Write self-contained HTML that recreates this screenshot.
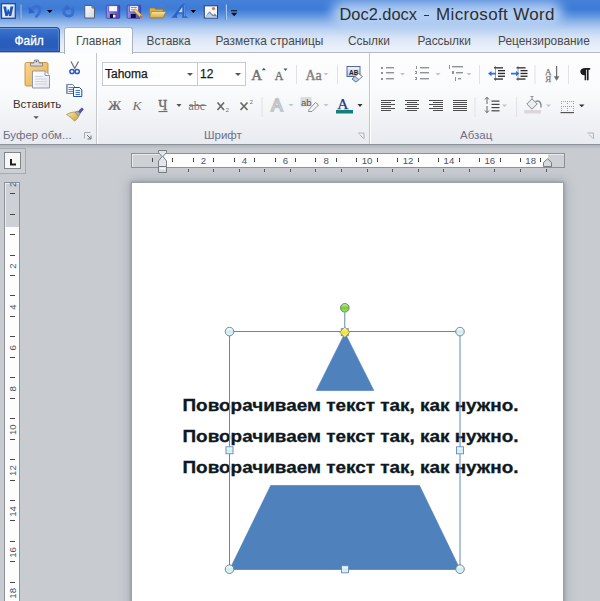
<!DOCTYPE html>
<html><head><meta charset="utf-8">
<style>
*{margin:0;padding:0;box-sizing:border-box}
html,body{width:600px;height:601px;overflow:hidden;background:#c8ccd1;font-family:"Liberation Sans",sans-serif}
.a{position:absolute}
#top{left:0;top:0;width:600px;height:53px;background:linear-gradient(#4581d8 0px,#3d7bd7 9px,#5b92de 15px,#8fb4e9 22px,#bcd3f2 30px,#d9e5f7 38px,#e7eef9 46px,#edf2fa 52px)}
#glow{left:332px;top:2px;width:230px;height:23px;background:rgba(198,220,248,.85);border-radius:11px;filter:blur(6px)}
.title{left:339.5px;top:5.3px;font-size:16.4px;color:#2e2e2e;white-space:nowrap;letter-spacing:0px}
.tab{top:34px;font-size:11.9px;color:#4a4a4a;white-space:nowrap}
#file{left:0;top:27px;width:60px;height:25px;background:linear-gradient(#3d74d0,#2b5fbd 50%,#2a5cb8 85%,#3466c4);border-radius:0 4px 0 0;border:1px solid #1f4f9f;border-left:none;box-shadow:inset 0 1px 0 #6a9ae0,inset -1px 0 0 #4f82d0}
#home{left:64px;top:27px;width:69px;height:27px;background:#fbfcfe;border:1px solid #a9b1bc;border-bottom:none;border-radius:3px 3px 0 0}
#ribbon{left:0;top:52px;width:600px;height:93px;background:linear-gradient(#fdfdfe 0%,#fafbfc 40%,#f1f3f6 70%,#e8ebf0 100%);border-top:1px solid #b3bac5;border-bottom:1px solid #8f959d}
#rshadow{left:0;top:145px;width:600px;height:4px;background:linear-gradient(#b0b4ba,#c8ccd1)}
.sep{width:1px;background:#dde1e7}
.gsep{width:2px;background:linear-gradient(90deg,#c3c7cd 50%,#ffffff 50%);}
.glab{top:129px;font-size:11.5px;color:#6c7088;white-space:nowrap}
.txt{font-size:11.5px;color:#222;white-space:nowrap}
.arr{width:0;height:0;border-left:3px solid transparent;border-right:3px solid transparent;border-top:3px solid #555}
.arrg{width:0;height:0;border-left:3px solid transparent;border-right:3px solid transparent;border-top:3px solid #b8bcc2}
#page{left:132px;top:183px;width:431px;height:430px;background:#fff;box-shadow:0 0 0 1px #9da2a9,0 0 3px 1px rgba(90,95,105,.45),0 0 10px 3px rgba(110,115,125,.35)}
</style></head><body>
<div class="a" id="top"></div>
<div class="a" id="glow"></div>

<!-- QAT -->
<svg class="a" style="left:0;top:0" width="245" height="24" viewBox="0 0 245 24">
 <defs>
  <linearGradient id="wg" x1="0" y1="0" x2="1" y2="1"><stop offset="0" stop-color="#ffffff"/><stop offset="1" stop-color="#c9d8ee"/></linearGradient>
  <linearGradient id="ug" x1="0" y1="0" x2="0" y2="1"><stop offset="0" stop-color="#7aa4ea"/><stop offset="1" stop-color="#2f61c4"/></linearGradient>
  <linearGradient id="pg" x1="0" y1="0" x2="1" y2="1"><stop offset="0" stop-color="#ffffff"/><stop offset="1" stop-color="#cfd3dc"/></linearGradient>
  <linearGradient id="fg" x1="0" y1="0" x2="0" y2="1"><stop offset="0" stop-color="#f7e7a0"/><stop offset="1" stop-color="#d8a840"/></linearGradient>
  <linearGradient id="sg" x1="0" y1="0" x2="1" y2="0"><stop offset="0" stop-color="#9a90ee"/><stop offset="1" stop-color="#5046c0"/></linearGradient>
 </defs>
 <!-- word icon -->
 <rect x="1.5" y="3.7" width="13.8" height="14.6" fill="url(#wg)" stroke="#1d4c9c" stroke-width="1.3"/>
 <path d="M3.2 6.5 H6.2 L7 12.5 L7.6 9.5 H9 L9.6 12.5 L10.4 6.5 H13.4 L11.2 16 H8.9 L8.3 13.2 L7.7 16 H5.4 Z" fill="#1a55b8"/>
 <rect x="19.6" y="4.5" width="1" height="15" fill="#5f7aa8"/><rect x="20.6" y="4.5" width="0.8" height="15" fill="#b8cdee"/>
 <!-- undo -->
 <path d="M31.5 10 C33.5 5.8 38.8 5.3 39.8 8.8 C40.6 11.8 38.5 14.2 36.4 16.4" fill="none" stroke="#3a6ed0" stroke-width="2.8" stroke-linecap="round"/>
 <path d="M28.4 6.8 L29 13.5 L35.2 12.4 Z" fill="#2f62c8"/>
 <path d="M47 10 L52.5 10 L49.75 13 Z" fill="#000"/>
 <!-- redo -->
 <path d="M72.3 9 C74 12 72.6 16 68.5 16 C64.8 16 63.3 13 63.8 10.6 C64.2 8.8 65.6 7.6 67 7.4" fill="none" stroke="#3a6ed0" stroke-width="3" stroke-linecap="round"/>
 <path d="M66 4.8 L70.5 8.6 L65.5 10.5 Z" fill="#3566c8"/>
 <!-- new doc -->
 <path d="M84.8 5.5 L92 5.5 L94.5 8 L94.5 18 L84.8 18 Z" fill="url(#pg)" stroke="#4d5566" stroke-width="0.9"/>
 <path d="M92 5.5 L92 8 L94.5 8" fill="none" stroke="#4d5566" stroke-width="0.9"/>
 <!-- save -->
 <rect x="106.3" y="5.3" width="13.4" height="13" rx="0.8" fill="url(#sg)" stroke="#3a32a0" stroke-width="0.7"/>
 <rect x="108.8" y="5.8" width="8.6" height="6" fill="#f6f8fc" stroke="#4a44b8" stroke-width="0.6"/>
 <rect x="110" y="14" width="6.2" height="4" fill="#14142a"/>
 <rect x="113" y="14.6" width="2.6" height="3" fill="#f0f0f4"/>
 <!-- edit (floppy + pencil) -->
 <rect x="127.2" y="5.3" width="13.4" height="13" rx="0.8" fill="url(#sg)" stroke="#3a32a0" stroke-width="0.7"/>
 <rect x="129.6" y="5.8" width="8.6" height="6" fill="#f6f8fc" stroke="#4a44b8" stroke-width="0.6"/>
 <path d="M130.8 7.6 H136.8 M130.8 9.8 H135" stroke="#6a6a8a" stroke-width="0.8"/>
 <rect x="130.8" y="14" width="5" height="4" fill="#14142a"/>
 <path d="M133.6 10.6 L135.6 8.8 L142.6 16 L140.6 18 Z" fill="#f3d25a" stroke="#a88a2a" stroke-width="0.6"/>
 <path d="M140.2 15.2 L142.6 16 L141.2 18.4 L139.6 17.6 Z" fill="#e0603a"/>
 <!-- open folder -->
 <path d="M149.5 8 L154.5 8 L155.5 9.2 L163 9.2 L163 17.8 L149.5 17.8 Z" fill="#d9ad4a" stroke="#a57a22" stroke-width="0.7"/>
 <path d="M151.5 11.5 L166 11.5 L163 17.8 L149.5 17.8 Z" fill="url(#fg)" stroke="#a57a22" stroke-width="0.7"/>
 <path d="M159.5 7.5 C161 4.8 164 4.8 165 7.8" fill="none" stroke="#5f7fa8" stroke-width="1.2"/>
 <path d="M163.6 6.6 L166.6 9 L163.2 9.6 Z" fill="#5f7fa8"/>
 <!-- wordart A -->
 <path d="M171.5 17.2 C174 15.5 177 11 180.5 6 L183.5 3.5 L185 3.5 L185.5 16 L188.8 17.8 L181.5 17.8 L182.5 16.5 L182.3 13.8 L177.8 13.8 C176.8 15.2 176.5 16.5 177.5 17.8 L171.5 17.8 Z" fill="#2c62c8"/>
 <path d="M178.6 12.3 L182.3 7 L182.3 12.3 Z" fill="#c8daf6"/>
 <path d="M183.8 4.5 L184.6 4.5 L185 16.5 L184.2 16.5 Z" fill="#6a9ae8"/>
 <path d="M190.5 10 L196 10 L193.25 13 Z" fill="#000"/>
 <!-- picture -->
 <rect x="204.3" y="5.8" width="13.2" height="12.2" fill="#f4f7fc" stroke="#24406e" stroke-width="1"/>
 <path d="M205 17.5 L209.5 11.2 L213.2 15 L214.8 13.6 L217 16 L217 17.5 Z" fill="#6a86b0"/><path d="M205 17.5 L209.5 12.8 L212.5 16 L217 16.5 L217 17.5 Z" fill="#ffffff" opacity=".6"/>
 <circle cx="213.5" cy="8.6" r="1.6" fill="#f07030"/>
 <rect x="225" y="4.5" width="1.2" height="15.5" fill="#6d84ad"/><rect x="226.2" y="4.5" width="0.8" height="15.5" fill="#c4d6f0"/>
 <rect x="231" y="10.2" width="6.2" height="1.1" fill="#111"/>
 <path d="M231 12.8 L237.3 12.8 L234.15 16.2 Z" fill="#111"/>
</svg>
<div class="a title">Doc2.docx</div><div class="a" style="left:424px;top:14.6px;width:5px;height:1.3px;background:#333"></div><div class="a title" style="left:436px;font-size:17px;top:4.8px;letter-spacing:0.35px">Microsoft Word</div>

<div class="a" id="file"></div>
<div class="a tab" style="left:14.5px;color:#fff;-webkit-text-stroke:0.3px #fff">Файл</div>
<div class="a" id="ribbon"></div>
<div class="a" id="rshadow"></div>
<svg class="a" style="left:0;top:0" width="100" height="145"><path d="M84.5 138.5 V132.5 H90.5" fill="none" stroke="#a9adb3" stroke-width="1"/><path d="M87 135 L90.5 138.5 M91 135.5 V139 H87.5" fill="none" stroke="#6f747a" stroke-width="1"/></svg>
<div class="a" id="home"></div>
<div class="a tab" style="left:76px">Главная</div>
<div class="a tab" style="left:146.5px">Вставка</div>
<div class="a tab" style="left:215.5px">Разметка страницы</div>
<div class="a tab" style="left:348px">Ссылки</div>
<div class="a tab" style="left:417.5px">Рассылки</div>
<div class="a tab" style="left:498px">Рецензирование</div>


<!-- clipboard group icons -->
<svg class="a" style="left:0;top:52px" width="96" height="92" viewBox="0 52 96 92">
 <defs>
  <linearGradient id="cbg" x1="0" y1="0" x2="1" y2="1"><stop offset="0" stop-color="#f8d690"/><stop offset="1" stop-color="#e9ae52"/></linearGradient>
  <linearGradient id="dg" x1="0" y1="0" x2="1" y2="1"><stop offset="0" stop-color="#ffffff"/><stop offset="1" stop-color="#e2e6ee"/></linearGradient>
  <linearGradient id="brg" x1="0" y1="0" x2="1" y2="1"><stop offset="0" stop-color="#f8eea0"/><stop offset="1" stop-color="#c8a040"/></linearGradient>
 </defs>
 <rect x="25" y="62.5" width="23" height="23.5" rx="1.5" fill="url(#cbg)" stroke="#c28e3c" stroke-width="0.9"/>
 <path d="M30.5 66 L30.5 63 L34 63 L34.5 60 L38.5 60 L39 63 L42.5 63 L42.5 66 Z" fill="#d8dce2" stroke="#7d838c" stroke-width="0.9"/>
 <circle cx="36.5" cy="61.5" r="0.8" fill="#555"/>
 <path d="M32.5 71 L45 71 L49.5 75.5 L49.5 88 L32.5 88 Z" fill="url(#dg)" stroke="#8a919c" stroke-width="0.9"/>
 <path d="M45 71 L45 75.5 L49.5 75.5" fill="#f2f4f8" stroke="#8a919c" stroke-width="0.9"/>
 <path d="M35 76.5 H43 M35 79 H47 M35 81.5 H47 M35 84 H47" stroke="#c5cfdd" stroke-width="0.9"/>
 <path d="M33.4 116.3 L38.8 116.3 L36.1 119 Z" fill="#555"/>
 <!-- scissors -->
 <path d="M71 61.5 L75 69 M78.5 61.5 L74.5 69" stroke="#6b7480" stroke-width="1.3"/>
 <circle cx="72" cy="71.5" r="2.1" fill="none" stroke="#2f58c0" stroke-width="1.5"/>
 <circle cx="77.2" cy="71.5" r="2.1" fill="none" stroke="#2f58c0" stroke-width="1.5"/>
 <!-- copy -->
 <path d="M66.5 84.5 L72.5 84.5 L74.5 86.5 L74.5 93.5 L66.5 93.5 Z" fill="#f2f5fb" stroke="#5a76a8" stroke-width="0.9"/>
 <rect x="66.5" y="84.5" width="1.5" height="9" fill="#9aa8c0"/>
 <path d="M68.5 87.5 H73 M68.5 89.5 H73 M68.5 91.5 H73" stroke="#3e78d8" stroke-width="0.9"/>
 <path d="M73.5 87.5 L79.5 87.5 L81.8 89.8 L81.8 96.5 L73.5 96.5 Z" fill="#f4f7fd" stroke="#1f4ea8" stroke-width="1"/>
 <path d="M75.5 90.5 H80 M75.5 92.5 H80 M75.5 94.5 H80" stroke="#2f68d0" stroke-width="0.9"/>
 <!-- format painter -->
 <path d="M77.5 112.5 L81 108.5 C81.8 107.8 83.2 108.2 83.2 109.5 L79.5 114 Z" fill="#5b4fb5" stroke="#3c3090" stroke-width="0.6"/>
 <path d="M75 112 L77.8 111 L80 113.5 L78.6 116.5 Z" fill="#a8acb4" stroke="#6a6e76" stroke-width="0.6"/>
 <path d="M66.5 114.5 C69 113 72.5 112 75 112 L78.6 116.5 C77.5 118.5 76 120.3 74.5 121 C72 118.5 69 116 66.5 114.5 Z" fill="url(#brg)" stroke="#9a8440" stroke-width="0.7"/>
 </svg>
<div class="a gsep" style="left:96px;top:53px;height:91px"></div>
<!-- group separators -->

<div class="a gsep" style="left:369px;top:53px;height:91px"></div>


<!-- font group -->
<div class="a" style="left:102px;top:62px;width:96px;height:24px;background:#fff;border:1px solid #c6cbd3"></div>
<div class="a" style="left:197px;top:62px;width:49px;height:24px;background:#fff;border:1px solid #c6cbd3"></div>
<div class="a txt" style="left:105px;top:67px;font-size:12px;color:#1a1a1a;-webkit-text-stroke:0.25px #1a1a1a">Tahoma</div>
<div class="a txt" style="left:200px;top:67px;font-size:12px;color:#1a1a1a;-webkit-text-stroke:0.25px #1a1a1a">12</div>
<div class="a arr" style="left:187px;top:73px"></div>
<div class="a arr" style="left:235px;top:73px"></div>
<svg class="a" style="left:96px;top:52px" width="274" height="92" viewBox="96 52 274 92">
 <defs>
  <linearGradient id="ceg" x1="0" y1="0" x2="0" y2="1"><stop offset="0" stop-color="#f2f5fb"/><stop offset="1" stop-color="#b7c8e6"/></linearGradient>
 </defs>
 <text x="251.3" y="79.8" font-family="Liberation Serif" font-size="15" fill="#707070" stroke="#707070" stroke-width="0.45">A</text>
 <path d="M261.8 70.3 L263.8 67.8 L265.8 70.3 Z" fill="#555"/>
 <text x="274.8" y="80.3" font-family="Liberation Serif" font-size="12" fill="#707070" stroke="#707070" stroke-width="0.35">A</text>
 <path d="M283.5 68.5 L285.5 71 L287.5 68.5 Z" fill="#555"/>
 <rect x="296" y="65" width="1" height="19" fill="#dfe2e7"/>
 <text x="305.5" y="80" font-family="Liberation Serif" font-size="14" fill="#7c7c7c" stroke="#7c7c7c" stroke-width="0.35">Aa</text>
 <path d="M323.5 73 L328.5 73 L326 75.5 Z" fill="#c2c5ca"/>
 <rect x="337" y="65" width="1" height="19" fill="#dfe2e7"/>
 <!-- clear formatting -->
 <rect x="347" y="66.5" width="13" height="10" fill="url(#ceg)" stroke="#3a5a98" stroke-width="0.9"/>
 <text x="349" y="74.5" font-family="Liberation Sans" font-weight="bold" font-size="6.5" fill="#222">AB</text>
 <path d="M352 79 L358.5 73.5 L362.5 76.5 L356 82 Z" fill="#fff" stroke="#5a6a8a" stroke-width="0.9"/>
 <path d="M352 79 L355 76.5 L359 79.5 L356 82 Z" fill="#b9d0ec" stroke="#5a6a8a" stroke-width="0.7"/>
 <!-- row 2 -->
 <text x="107.8" y="110" font-family="Liberation Serif" font-weight="bold" font-size="13.2" fill="#747474" transform="translate(0 110) skewX(-5) translate(0 -110)">Ж</text>
 <text x="132.5" y="110" font-family="Liberation Serif" font-style="italic" font-size="13.5" fill="#707070">К</text>
 <text x="158.2" y="110" font-family="Liberation Serif" font-size="14" fill="#6a6a6a" stroke="#6a6a6a" stroke-width="0.3">Ч</text>
 <rect x="158.5" y="111" width="9" height="1.1" fill="#6e6e6e"/>
 <path d="M176.5 104 L181.5 104 L179 107 Z" fill="#555"/>
 <text x="188.5" y="110" font-family="Liberation Serif" font-size="12" fill="#777">abc</text>
 <rect x="189" y="105" width="17.5" height="1" fill="#777"/>
 <path d="M217.5 102.5 L224 110 M224 102.5 L217.5 110" stroke="#6a6a6a" stroke-width="1.7"/>
 <text x="225.8" y="111.5" font-family="Liberation Sans" font-size="5.5" fill="#6a6a6a">2</text>
 <path d="M240.5 102.5 L247.5 110 M247.5 102.5 L240.5 110" stroke="#6a6a6a" stroke-width="1.7"/>
 <text x="249.7" y="104.3" font-family="Liberation Sans" font-size="5.5" fill="#6a6a6a">2</text>
 <rect x="261.5" y="97" width="1" height="20" fill="#dfe2e7"/>
 <text x="271.3" y="111" font-family="Liberation Sans" font-size="17" fill="#fafafa" stroke="#d6d8dc" stroke-width="2.2">A</text><text x="271.3" y="111" font-family="Liberation Sans" font-size="17" fill="#f4f4f5" stroke="#b4b7bc" stroke-width="0.8">A</text>
 <path d="M288.5 104 L293.5 104 L291 106.5 Z" fill="#c2c5ca"/>
 <rect x="300.5" y="97" width="11" height="9.5" fill="#dadcdf"/><text x="301" y="105.5" font-family="Liberation Sans" font-size="9.5" fill="#555">ab</text>
 <path d="M309 109.5 L315.5 102.5 L318.5 105 L312 111.5 L308.5 111.5 Z" fill="#f4f4f6" stroke="#85888d" stroke-width="0.9"/>
 <path d="M323.5 104 L328.5 104 L326 106.5 Z" fill="#c2c5ca"/>
 <text x="337.2" y="108.8" font-family="Liberation Serif" font-size="15.5" fill="#22378a" stroke="#22378a" stroke-width="0.25">A</text>
 <rect x="336" y="110" width="17" height="3.5" fill="#15807a"/>
 <path d="M357.5 104 L362.5 104 L360 107 Z" fill="#333"/>
 <path d="M358 133 L364 133 L364 139 M359.5 134.5 L363.5 138.5" fill="none" stroke="#a9aeb6" stroke-width="0.9"/>
</svg>

<!-- paragraph group -->
<svg class="a" style="left:370px;top:52px" width="230" height="92" viewBox="370 52 230 92">
 <g fill="#8e9299">
  <rect x="381" y="67" width="2" height="2"/><rect x="381" y="72" width="2" height="2"/><rect x="381" y="78" width="2" height="2"/>
  <rect x="386" y="67" width="8" height="1"/><rect x="386" y="68" width="8" height="1" opacity=".4"/><rect x="386" y="72" width="8" height="1"/><rect x="386" y="73" width="8" height="1" opacity=".4"/><rect x="386" y="78" width="8" height="1"/><rect x="386" y="79" width="8" height="1" opacity=".4"/>
  <rect x="416" y="66" width="1" height="3"/><rect x="415" y="71" width="2" height="1"/><rect x="416" y="72" width="1" height="1"/><rect x="415" y="73" width="2" height="1"/><rect x="415" y="77" width="2" height="1"/><rect x="416" y="78" width="1" height="1"/><rect x="415" y="79" width="2" height="1"/>
  <rect x="420" y="67" width="9" height="1"/><rect x="420" y="68" width="9" height="1" opacity=".4"/><rect x="420" y="72" width="9" height="1"/><rect x="420" y="73" width="9" height="1" opacity=".4"/><rect x="420" y="78" width="9" height="1"/><rect x="420" y="79" width="9" height="1" opacity=".4"/>
  <rect x="449" y="65" width="1" height="4"/><rect x="452" y="66" width="11" height="1"/><rect x="452" y="67" width="11" height="1" opacity=".4"/>
  <rect x="452" y="71" width="2" height="3"/><rect x="456" y="72" width="7" height="1"/><rect x="456" y="73" width="7" height="1" opacity=".4"/>
  <rect x="455" y="77" width="1" height="4"/><rect x="458" y="78" width="3" height="1"/><rect x="458" y="79" width="3" height="1" opacity=".4"/>
 </g>
 <g fill="#bfc3ca"><path d="M400 73 L405 73 L402.5 75.5 Z"/><path d="M435.5 73 L440.5 73 L438 75.5 Z"/><path d="M466.5 73 L471.5 73 L469 75.5 Z"/></g>
 <rect x="479" y="65" width="1" height="19" fill="#dfe2e7"/>
 <!-- indent -->
 <g fill="#2a2a2a">
  <rect x="494" y="67.2" width="9" height="1.3"/><rect x="498" y="70" width="7" height="1.3"/><rect x="498" y="72.8" width="7" height="1.3"/><rect x="498" y="75.6" width="7" height="1.3"/><rect x="494" y="78.4" width="9" height="1.3"/>
  <rect x="516.5" y="67.2" width="9" height="1.3"/><rect x="520.5" y="70" width="7" height="1.3"/><rect x="520.5" y="72.8" width="7" height="1.3"/><rect x="520.5" y="75.6" width="7" height="1.3"/><rect x="516.5" y="78.4" width="9" height="1.3"/>
 </g>
 <path d="M495.5 66.5 V81" stroke="#444" stroke-width="1" stroke-dasharray="1,1"/>
 <path d="M518 66.5 V81" stroke="#444" stroke-width="1" stroke-dasharray="1,1"/>
 <path d="M488 73.6 L491.5 71 L491.5 72.8 L496 72.8 L496 74.4 L491.5 74.4 L491.5 76.2 Z" fill="#2f6fe0"/>
 <path d="M519.5 73.6 L516 71 L516 72.8 L511 72.8 L511 74.4 L516 74.4 L516 76.2 Z" fill="#2f6fe0"/>
 <rect x="534.5" y="65" width="1" height="19" fill="#dfe2e7"/>
 <!-- sort -->
 <text x="545" y="74.5" font-family="Liberation Serif" font-size="9" fill="#7a7a7a" stroke="#7a7a7a" stroke-width="0.25">А</text>
 <text x="545.3" y="81.7" font-family="Liberation Serif" font-size="9" fill="#7a7a7a" stroke="#7a7a7a" stroke-width="0.25">Я</text>
 <rect x="556" y="66" width="1.2" height="12" fill="#6e6e6e"/><path d="M553.8 76.3 L559.4 76.3 L556.6 80.8 Z" fill="#6e6e6e"/>
 <rect x="568" y="65" width="1" height="19" fill="#dfe2e7"/>
 <path d="M585.3 68 H590.2 V69.8 H588.6 V80.3 H587 V69.8 H586.2 V80.3 H584.6 V75.3 C582 75.3 580.3 73.8 580.3 71.6 C580.3 69.4 582.2 68 585.3 68 Z" fill="#1e1e1e"/>
 <!-- align -->
 <g fill="#4e4e4e"><rect x="381" y="100" width="14" height="1"/><rect x="381" y="102" width="10" height="1"/><rect x="381" y="104" width="14" height="1"/><rect x="381" y="106" width="10" height="1"/><rect x="381" y="108" width="14" height="1"/><rect x="381" y="110" width="10" height="1"/><rect x="405" y="100" width="14" height="1"/><rect x="407" y="102" width="10" height="1"/><rect x="405" y="104" width="14" height="1"/><rect x="407" y="106" width="10" height="1"/><rect x="405" y="108" width="14" height="1"/><rect x="407" y="110" width="10" height="1"/><rect x="429" y="100" width="14" height="1"/><rect x="433" y="102" width="10" height="1"/><rect x="429" y="104" width="14" height="1"/><rect x="433" y="106" width="10" height="1"/><rect x="429" y="108" width="14" height="1"/><rect x="433" y="110" width="10" height="1"/><rect x="453" y="100" width="14" height="1"/><rect x="453" y="102" width="14" height="1"/><rect x="453" y="104" width="14" height="1"/><rect x="453" y="106" width="14" height="1"/><rect x="453" y="108" width="14" height="1"/><rect x="453" y="110" width="14" height="1"/></g>
 <rect x="474.5" y="97" width="1" height="20" fill="#dfe2e7"/>
 <!-- line spacing -->
 <path d="M487 97.5 V104 M487 106 V112.5" stroke="#666" stroke-width="1"/>
 <path d="M485 99.5 L487 97.3 L489 99.5 M485 110.5 L487 112.7 L489 110.5" fill="none" stroke="#666" stroke-width="1"/>
 <g fill="#444"><rect x="491.5" y="100.5" width="8" height="1.2"/><rect x="491.5" y="103.8" width="8" height="1.2"/><rect x="491.5" y="107" width="8" height="1.2"/><rect x="491.5" y="110.2" width="8" height="1.2"/></g>
 <path d="M502 104.5 L507 104.5 L504.5 107 Z" fill="#bfc3ca"/>
 <rect x="516" y="97" width="1" height="20" fill="#dfe2e7"/>
 <!-- shading -->
 <path d="M526.8 104 L532 98.8 L537.2 104 L532 109.2 Z" fill="#ececee" stroke="#85888d" stroke-width="1"/>
 <path d="M532 98.8 V96.8 M530.5 96.5 H533.5" stroke="#85888d" stroke-width="0.9"/>
 <path d="M535.5 101.5 C539 100 541.5 102 541 107.5" fill="none" stroke="#8d9095" stroke-width="1.5"/>
 <rect x="524.2" y="110" width="16.8" height="3.5" fill="#dcd6dc"/>
 <path d="M546 104.5 L551 104.5 L548.5 107 Z" fill="#bfc3ca"/>
 <!-- borders -->
 <g fill="#9a9ea4"><rect x="561" y="101" width="1" height="1"/><rect x="563" y="101" width="1" height="1"/><rect x="565" y="101" width="1" height="1"/><rect x="567" y="101" width="1" height="1"/><rect x="569" y="101" width="1" height="1"/><rect x="571" y="101" width="1" height="1"/><rect x="573" y="101" width="1" height="1"/><rect x="561" y="106" width="1" height="1"/><rect x="563" y="106" width="1" height="1"/><rect x="565" y="106" width="1" height="1"/><rect x="567" y="106" width="1" height="1"/><rect x="569" y="106" width="1" height="1"/><rect x="571" y="106" width="1" height="1"/><rect x="573" y="106" width="1" height="1"/><rect x="561" y="103" width="1" height="1"/><rect x="561" y="108" width="1" height="1"/><rect x="561" y="110" width="1" height="1"/><rect x="567" y="103" width="1" height="1"/><rect x="567" y="108" width="1" height="1"/><rect x="567" y="110" width="1" height="1"/><rect x="573" y="103" width="1" height="1"/><rect x="573" y="108" width="1" height="1"/><rect x="573" y="110" width="1" height="1"/></g>
 <rect x="560.5" y="112" width="13.5" height="1.2" fill="#555"/>
 <path d="M579 104.5 L584.5 104.5 L581.75 107.3 Z" fill="#333"/>
 <path d="M587.5 133 L593.5 133 L593.5 139 M589 134.5 L593 138.5" fill="none" stroke="#a9aeb6" stroke-width="0.9"/>
</svg>
<div class="a glab" style="left:3px">Буфер обм...</div>
<div class="a glab" style="left:204px">Шрифт</div>
<div class="a glab" style="left:460px">Абзац</div>

<div class="a txt" style="left:13px;top:97.5px;font-size:11.4px;color:#333">Вставить</div>

<!-- rulers -->
<div class="a" style="left:-2px;top:148px;width:28px;height:26px;border:1px solid #a6aab1;background:#ccd0d5"></div>
<div class="a" style="left:4px;top:152px;width:17px;height:17px;border:1px solid #80858c;background:#f7f7f7"></div>
<svg class="a" style="left:0;top:0" width="30" height="180"><path d="M11 159 V164.5 H16" fill="none" stroke="#1e1e1e" stroke-width="2"/></svg>
<div class="a" style="left:131px;top:153px;width:434px;height:15px;background:#cdd0d5;border:1px solid #8c9199;box-shadow:inset 1px 1px 0 #e9ebee"></div>
<div class="a" style="left:164px;top:154px;width:384px;height:13px;background:#fdfdfd"></div>
<svg class="a" style="left:0;top:0" width="600" height="601" viewBox="0 0 600 601">
<rect x="152" y="158" width="1" height="4" fill="#4a4a4a"/>
<rect x="172" y="158" width="1" height="4" fill="#4a4a4a"/>
<rect x="193" y="158" width="1" height="4" fill="#4a4a4a"/>
<rect x="213" y="158" width="1" height="4" fill="#4a4a4a"/>
<rect x="234" y="158" width="1" height="4" fill="#4a4a4a"/>
<rect x="254" y="158" width="1" height="4" fill="#4a4a4a"/>
<rect x="275" y="158" width="1" height="4" fill="#4a4a4a"/>
<rect x="295" y="158" width="1" height="4" fill="#4a4a4a"/>
<rect x="315" y="158" width="1" height="4" fill="#4a4a4a"/>
<rect x="336" y="158" width="1" height="4" fill="#4a4a4a"/>
<rect x="356" y="158" width="1" height="4" fill="#4a4a4a"/>
<rect x="377" y="158" width="1" height="4" fill="#4a4a4a"/>
<rect x="397" y="158" width="1" height="4" fill="#4a4a4a"/>
<rect x="418" y="158" width="1" height="4" fill="#4a4a4a"/>
<rect x="438" y="158" width="1" height="4" fill="#4a4a4a"/>
<rect x="459" y="158" width="1" height="4" fill="#4a4a4a"/>
<rect x="479" y="158" width="1" height="4" fill="#4a4a4a"/>
<rect x="500" y="158" width="1" height="4" fill="#4a4a4a"/>
<rect x="520" y="158" width="1" height="4" fill="#4a4a4a"/>
<rect x="540" y="158" width="1" height="4" fill="#4a4a4a"/>

<text x="203.50" y="164.3" font-family="Liberation Sans" font-size="9.6" fill="#4a5468" text-anchor="middle">2</text>
<text x="244.40" y="164.3" font-family="Liberation Sans" font-size="9.6" fill="#4a5468" text-anchor="middle">4</text>
<text x="285.30" y="164.3" font-family="Liberation Sans" font-size="9.6" fill="#4a5468" text-anchor="middle">6</text>
<text x="326.20" y="164.3" font-family="Liberation Sans" font-size="9.6" fill="#4a5468" text-anchor="middle">8</text>
<text x="367.10" y="164.3" font-family="Liberation Sans" font-size="9.6" fill="#4a5468" text-anchor="middle">10</text>
<text x="408.00" y="164.3" font-family="Liberation Sans" font-size="9.6" fill="#4a5468" text-anchor="middle">12</text>
<text x="448.90" y="164.3" font-family="Liberation Sans" font-size="9.6" fill="#4a5468" text-anchor="middle">14</text>
<text x="489.80" y="164.3" font-family="Liberation Sans" font-size="9.6" fill="#4a5468" text-anchor="middle">16</text>
<text x="530.70" y="164.3" font-family="Liberation Sans" font-size="9.6" fill="#4a5468" text-anchor="middle">18</text>
<rect x="188" y="169" width="1" height="3" fill="#5a5a5a"/>
<rect x="213" y="169" width="1" height="3" fill="#5a5a5a"/>
<rect x="239" y="169" width="1" height="3" fill="#5a5a5a"/>
<rect x="264" y="169" width="1" height="3" fill="#5a5a5a"/>
<rect x="290" y="169" width="1" height="3" fill="#5a5a5a"/>
<rect x="315" y="169" width="1" height="3" fill="#5a5a5a"/>
<rect x="341" y="169" width="1" height="3" fill="#5a5a5a"/>
<rect x="367" y="169" width="1" height="3" fill="#5a5a5a"/>
<rect x="392" y="169" width="1" height="3" fill="#5a5a5a"/>
<rect x="418" y="169" width="1" height="3" fill="#5a5a5a"/>
<rect x="443" y="169" width="1" height="3" fill="#5a5a5a"/>
<rect x="469" y="169" width="1" height="3" fill="#5a5a5a"/>
<rect x="494" y="169" width="1" height="3" fill="#5a5a5a"/>
<rect x="520" y="169" width="1" height="3" fill="#5a5a5a"/>
<rect x="546" y="169" width="1" height="3" fill="#5a5a5a"/>
<path d="M158.5 150.5 H166.5 V152.5 L163 156.5 L166.5 161 V166.5 H158.5 V161 L162 156.5 L158.5 152.5 Z" fill="#e4e6e9" stroke="#6e737a" stroke-width="0.9"/>
<path d="M158.5 166.5 H166.5 V172.5 H158.5 Z" fill="#d8dadd" stroke="#6e737a" stroke-width="0.9"/>
<path d="M159.3 167.5 H165.7 V169.5 H159.3 Z" fill="#f4f5f6"/>
<path d="M543.5 166.5 V162.5 L547.5 158.8 L551.5 162.5 V166.5 Z" fill="#d9dbde" stroke="#6e737a" stroke-width="0.9"/>
</svg>
<div class="a" style="left:4px;top:182px;width:16px;height:430px;background:#cdd0d5;border:1px solid #8c9199;border-bottom:none;box-shadow:inset 1px 1px 0 #e9ebee"></div>
<div class="a" style="left:5px;top:226.5px;width:14px;height:380px;background:#fdfdfd"></div>
<svg class="a" style="left:0;top:0" width="30" height="601" viewBox="0 0 30 601"><defs><clipPath id="vclip"><rect x="5" y="182.5" width="14" height="420"/></clipPath></defs><g clip-path="url(#vclip)">
<rect x="10" y="193" width="5" height="1" fill="#4a4a4a"/>
<rect x="10" y="214" width="5" height="1" fill="#4a4a4a"/>
<rect x="10" y="234" width="5" height="1" fill="#4a4a4a"/>
<rect x="10" y="255" width="5" height="1" fill="#4a4a4a"/>
<rect x="10" y="275" width="5" height="1" fill="#4a4a4a"/>
<rect x="10" y="295" width="5" height="1" fill="#4a4a4a"/>
<rect x="10" y="316" width="5" height="1" fill="#4a4a4a"/>
<rect x="10" y="336" width="5" height="1" fill="#4a4a4a"/>
<rect x="10" y="357" width="5" height="1" fill="#4a4a4a"/>
<rect x="10" y="377" width="5" height="1" fill="#4a4a4a"/>
<rect x="10" y="398" width="5" height="1" fill="#4a4a4a"/>
<rect x="10" y="418" width="5" height="1" fill="#4a4a4a"/>
<rect x="10" y="439" width="5" height="1" fill="#4a4a4a"/>
<rect x="10" y="459" width="5" height="1" fill="#4a4a4a"/>
<rect x="10" y="480" width="5" height="1" fill="#4a4a4a"/>
<rect x="10" y="500" width="5" height="1" fill="#4a4a4a"/>
<rect x="10" y="520" width="5" height="1" fill="#4a4a4a"/>
<rect x="10" y="541" width="5" height="1" fill="#4a4a4a"/>
<rect x="10" y="561" width="5" height="1" fill="#4a4a4a"/>
<rect x="10" y="582" width="5" height="1" fill="#4a4a4a"/>
<text transform="translate(16.2 184.30) rotate(-90)" font-family="Liberation Sans" font-size="9.6" fill="#4a5468" text-anchor="middle">2</text>
<text transform="translate(16.2 266.10) rotate(-90)" font-family="Liberation Sans" font-size="9.6" fill="#4a5468" text-anchor="middle">2</text>
<text transform="translate(16.2 307.00) rotate(-90)" font-family="Liberation Sans" font-size="9.6" fill="#4a5468" text-anchor="middle">4</text>
<text transform="translate(16.2 347.90) rotate(-90)" font-family="Liberation Sans" font-size="9.6" fill="#4a5468" text-anchor="middle">6</text>
<text transform="translate(16.2 388.80) rotate(-90)" font-family="Liberation Sans" font-size="9.6" fill="#4a5468" text-anchor="middle">8</text>
<text transform="translate(16.2 429.70) rotate(-90)" font-family="Liberation Sans" font-size="9.6" fill="#4a5468" text-anchor="middle">10</text>
<text transform="translate(16.2 470.60) rotate(-90)" font-family="Liberation Sans" font-size="9.6" fill="#4a5468" text-anchor="middle">12</text>
<text transform="translate(16.2 511.50) rotate(-90)" font-family="Liberation Sans" font-size="9.6" fill="#4a5468" text-anchor="middle">14</text>
<text transform="translate(16.2 552.40) rotate(-90)" font-family="Liberation Sans" font-size="9.6" fill="#4a5468" text-anchor="middle">16</text>
<text transform="translate(16.2 593.30) rotate(-90)" font-family="Liberation Sans" font-size="9.6" fill="#4a5468" text-anchor="middle">18</text>
</g></svg>
<div class="a" id="page"></div>

<!-- document content -->
<svg class="a" style="left:0;top:0" width="600" height="601" viewBox="0 0 600 601">
 <defs>
  <linearGradient id="hg" x1="0" y1="0" x2="0" y2="1"><stop offset="0" stop-color="#ffffff"/><stop offset="0.5" stop-color="#c9eef3"/><stop offset="1" stop-color="#e4f5f8"/></linearGradient>
  <linearGradient id="gg" x1="0" y1="0" x2="0" y2="1"><stop offset="0" stop-color="#c8f59a"/><stop offset="0.5" stop-color="#6fd22e"/><stop offset="1" stop-color="#9ee86a"/></linearGradient>
  <linearGradient id="yg" x1="0" y1="0" x2="0" y2="1"><stop offset="0" stop-color="#fffde0"/><stop offset="0.5" stop-color="#f5e02a"/><stop offset="1" stop-color="#fff6a0"/></linearGradient>
 </defs>
 <path d="M345 333 L373.8 390.5 L316.3 390.5 Z" fill="#4f81bd" stroke="#4a7ab4" stroke-width="0.6"/>
 <path d="M270.7 485.5 L419.5 485.5 L460 569.3 L229.8 569.3 Z" fill="#4f81bd" stroke="#4a7ab4" stroke-width="0.6"/>
 <g font-family="Liberation Sans" font-weight="bold" font-size="16.9" fill="#0e1822" stroke="#0e1822" stroke-width="0.3">
  <text id="t1" x="182.5" y="410.7" textLength="336" lengthAdjust="spacingAndGlyphs">Поворачиваем текст так, как нужно.</text>
  <text x="182.5" y="441.7" textLength="336" lengthAdjust="spacingAndGlyphs">Поворачиваем текст так, как нужно.</text>
  <text x="182.5" y="472.5" textLength="336" lengthAdjust="spacingAndGlyphs">Поворачиваем текст так, как нужно.</text>
 </g>
 <rect x="229.5" y="331.5" width="230.5" height="237.8" fill="none" stroke="#6487b4" stroke-width="1"/>
 <path d="M344.8 312.5 V328" stroke="#6487b4" stroke-width="1"/>
 <circle cx="344.8" cy="307.8" r="4.3" fill="url(#gg)" stroke="#6b6f74" stroke-width="0.9"/>
 <rect x="341.3" y="328.7" width="7" height="7" fill="url(#hg)" stroke="#6487b4" stroke-width="0.9"/>
 <path d="M344.8 327 L349.8 332.2 L344.8 337.4 L339.8 332.2 Z" fill="url(#yg)" stroke="#8a8a6a" stroke-width="0.8"/>
 <g fill="url(#hg)" stroke="#737a82" stroke-width="0.9">
  <circle cx="229.5" cy="331.6" r="4.3"/><circle cx="460" cy="331.6" r="4.3"/>
  <circle cx="229.5" cy="569.2" r="4.3"/><circle cx="460" cy="569.2" r="4.3"/>
 </g>
 <g fill="url(#hg)" stroke="#6487b4" stroke-width="0.9">
  <rect x="226" y="446.8" width="7" height="7"/><rect x="456.5" y="446.8" width="7" height="7"/>
  <rect x="341.5" y="565.8" width="7" height="7"/>
 </g>
</svg>
</body></html>
